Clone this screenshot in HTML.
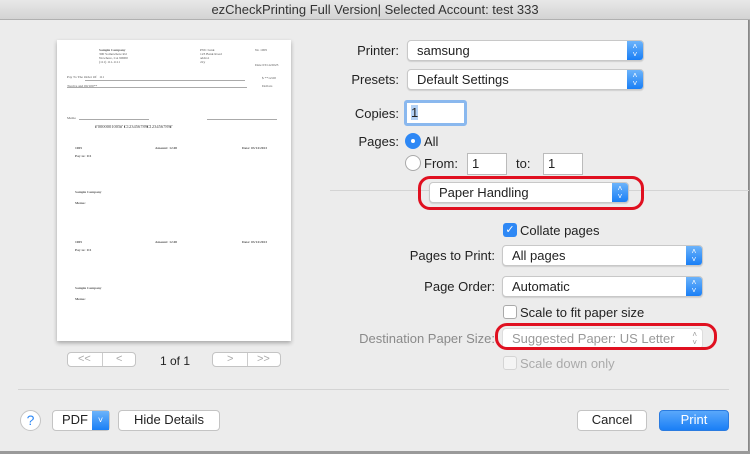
<!DOCTYPE html><html><head><style>
*{box-sizing:border-box;margin:0;padding:0}
body{width:750px;height:454px;background:#9a9a9a;font-family:"Liberation Sans",sans-serif;font-size:13px;color:#222;position:relative;overflow:hidden}
.a{position:absolute}
.title{left:0;top:0;width:750px;height:20px;background:linear-gradient(#e8e8e8,#d3d3d3);border-bottom:1px solid #b0b0b0;text-align:center;font-size:13px;line-height:20px;color:#333}
.dlg{left:0;top:20px;width:749px;height:431px;background:#ececec;border-right:1px solid #888}
.pop{position:absolute;background:#fff;border:1px solid #c8c8c8;border-radius:4px;box-shadow:0 1px 1px rgba(0,0,0,.12);padding-left:9px;line-height:19px;font-size:13px;overflow:hidden}
.arr{position:absolute;right:0;top:0;bottom:0;width:16px;background:linear-gradient(#6cb3fa,#1a7ff6);color:#fff;font-size:8px;line-height:8px;text-align:center;padding-top:2px}
.lbl{position:absolute;text-align:right;font-size:13px}
.fld{position:absolute;background:#fff;border:1px solid #bbb;padding-left:4px;line-height:20px}
.rad{position:absolute;width:16px;height:16px;border-radius:50%}
.cb{position:absolute;width:14px;height:14px;border-radius:3px}
.btn{position:absolute;background:#fff;border:1px solid #c4c4c4;border-radius:4px;text-align:center;line-height:18px;font-size:13px}
.ell{position:absolute;border:3px solid #e01020;border-radius:12px}
.pg{left:57px;top:40px;width:234px;height:301px;background:#fff;box-shadow:0 2px 4px rgba(0,0,0,.3);font-family:"Liberation Serif",serif;color:#555;font-size:3.5px}
.pg div{position:absolute}
.ln{height:1px;background:#aaa}
</style></head><body>
<div class="a title">ezCheckPrinting Full Version| Selected Account: test 333</div>
<div class="a dlg"></div>
<div class="a pg">
<div style="left:42px;top:8px;font-weight:bold">Sample Company</div>
<div style="left:42px;top:12px;line-height:4px">300 Somewhere Rd<br>Nowhere, CA 90000<br>(111) 111-1111</div>
<div style="left:143px;top:8px;line-height:4px">PNC bank<br>123 Bank Road<br>addrs1<br>city</div>
<div style="left:198px;top:8px">No 1005</div>
<div style="left:198px;top:23px">Date 03/14/2023</div>
<div style="left:10px;top:35px">Pay To The Order Of &nbsp; 111</div>
<div class="ln" style="left:28px;top:40px;width:160px"></div>
<div style="left:205px;top:36px">$ **12.00</div>
<div style="left:10px;top:44px">Twelve and 00/100**</div>
<div class="ln" style="left:10px;top:47px;width:180px"></div>
<div style="left:205px;top:44px">Dollars</div>
<div style="left:10px;top:76px">Memo</div>
<div class="ln" style="left:22px;top:79px;width:70px"></div>
<div class="ln" style="left:150px;top:79px;width:70px"></div>
<div style="left:38px;top:84px;font-size:4.5px;color:#444">⑈0000001005⑈ ⑆123456789⑆123456789⑈</div>
<div style="left:18px;top:106px;font-weight:bold">1005</div>
<div style="left:98px;top:106px;font-weight:bold">Amount: 12.00</div>
<div style="left:185px;top:106px;font-weight:bold">Date: 03/14/2023</div>
<div style="left:18px;top:114px;font-weight:bold">Pay to: 111</div>
<div style="left:18px;top:150px;font-weight:bold">Sample Company</div>
<div style="left:18px;top:161px;font-weight:bold">Memo:</div>
<div style="left:18px;top:200px;font-weight:bold">1005</div>
<div style="left:98px;top:200px;font-weight:bold">Amount: 12.00</div>
<div style="left:185px;top:200px;font-weight:bold">Date: 03/14/2023</div>
<div style="left:18px;top:208px;font-weight:bold">Pay to: 111</div>
<div style="left:18px;top:246px;font-weight:bold">Sample Company</div>
<div style="left:18px;top:257px;font-weight:bold">Memo:</div>
</div>
<div class="btn" style="left:67px;top:352px;width:69px;height:15px;line-height:13px;color:#aaa;font-size:11px"><span style="position:absolute;left:10px">&lt;&lt;</span><span style="position:absolute;left:34px;top:0;bottom:0;border-left:1px solid #ccc"></span><span style="position:absolute;left:48px">&lt;</span></div>
<div class="a" style="left:160px;top:354px;font-size:12px">1 of 1</div>
<div class="btn" style="left:212px;top:352px;width:69px;height:15px;line-height:13px;color:#aaa;font-size:11px"><span style="position:absolute;left:14px">&gt;</span><span style="position:absolute;left:34px;top:0;bottom:0;border-left:1px solid #ccc"></span><span style="position:absolute;left:44px">&gt;&gt;</span></div>

<div class="lbl" style="right:351px;top:43px">Printer:</div>
<div class="pop" style="left:407px;top:40px;width:237px;height:21px">samsung<div class="arr">˄<br>˅</div></div>
<div class="lbl" style="right:351px;top:72px">Presets:</div>
<div class="pop" style="left:407px;top:69px;width:237px;height:21px">Default Settings<div class="arr">˄<br>˅</div></div>
<div class="lbl" style="right:351px;top:106px">Copies:</div>
<div class="fld" style="left:404px;top:100px;width:63px;height:26px;border:3px solid #8ab8ee;border-radius:3px;line-height:20px"><span style="background:#b3d1f5">1</span></div>
<div class="lbl" style="right:351px;top:134px">Pages:</div>
<div class="rad" style="left:405px;top:133px;background:#2e88f5"><div style="position:absolute;left:6px;top:6px;width:4px;height:4px;background:#fff;border-radius:50%"></div></div>
<div class="a" style="left:424px;top:134px">All</div>
<div class="rad" style="left:405px;top:155px;background:#fff;border:1px solid #aaa"></div>
<div class="a" style="left:424px;top:156px">From:</div>
<div class="fld" style="left:467px;top:153px;width:40px;height:22px">1</div>
<div class="a" style="left:516px;top:156px">to:</div>
<div class="fld" style="left:543px;top:153px;width:40px;height:22px">1</div>
<div class="a" style="left:330px;top:190px;width:419px;height:1px;background:#d4d4d4"></div>
<div class="pop" style="left:429px;top:182px;width:200px;height:21px">Paper Handling<div class="arr">˄<br>˅</div></div>
<div class="ell" style="left:418px;top:176px;width:226px;height:34px"></div>

<div class="cb" style="left:503px;top:223px;background:#2e88f5;color:#fff;font-size:11px;line-height:14px;text-align:center">✓</div>
<div class="a" style="left:520px;top:223px">Collate pages</div>
<div class="lbl" style="right:255px;top:248px">Pages to Print:</div>
<div class="pop" style="left:502px;top:245px;width:201px;height:21px">All pages<div class="arr">˄<br>˅</div></div>
<div class="lbl" style="right:255px;top:279px">Page Order:</div>
<div class="pop" style="left:502px;top:276px;width:201px;height:21px">Automatic<div class="arr">˄<br>˅</div></div>
<div class="cb" style="left:503px;top:305px;background:#fff;border:1px solid #aaa"></div>
<div class="a" style="left:520px;top:305px">Scale to fit paper size</div>
<div class="lbl" style="right:255px;top:331px;color:#8a8a8a">Destination Paper Size:</div>
<div class="pop" style="left:502px;top:328px;width:201px;height:21px;color:#999;box-shadow:none;border-color:#ddd">Suggested Paper: US Letter<span style="position:absolute;right:5px;top:0;font-size:8px;line-height:8px;padding-top:2px">˄<br>˅</span></div>
<div class="ell" style="left:495px;top:323px;width:222px;height:27px"></div>
<div class="cb" style="left:503px;top:356px;background:#f4f4f4;border:1px solid #d4d4d4"></div>
<div class="a" style="left:520px;top:356px;color:#aaa">Scale down only</div>

<div class="a" style="left:18px;top:389px;width:711px;height:1px;background:#d4d4d4"></div>
<div class="a" style="left:20px;top:410px;width:21px;height:21px;border-radius:50%;background:#fff;border:1px solid #c4c4c4;color:#2e88f5;text-align:center;line-height:19px;font-size:14px">?</div>
<div class="btn" style="left:52px;top:410px;width:58px;height:21px;text-align:left;padding-left:9px">PDF<div class="arr" style="width:17px;font-size:9px;line-height:18px;padding-top:0">˅</div></div>
<div class="btn" style="left:118px;top:410px;width:102px;height:21px">Hide Details</div>
<div class="btn" style="left:577px;top:410px;width:70px;height:21px">Cancel</div>
<div class="btn" style="left:659px;top:410px;width:70px;height:21px;background:linear-gradient(#5aa8fb,#1a7ff6);border-color:#2a7be0;color:#fff">Print</div>
</body></html>
